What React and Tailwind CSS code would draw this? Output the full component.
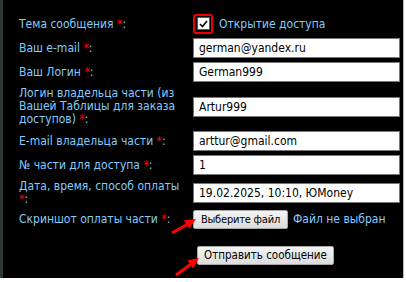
import React from "react";

const Star = () => <span className="text-[#ff0000]">*</span>;

const inputCls =
  "w-[207px] h-[20px] bg-white border border-[#767676] px-[5px] text-[12px] leading-[18px] text-black";

function Row({ h, label, children }) {
  return (
    <div className={`flex items-center ${h}`}>
      <div className="w-[174px] shrink-0 whitespace-nowrap text-[12px] leading-[13px] text-[#84ccff]">
        {label}
      </div>
      <div className="flex items-center">{children}</div>
    </div>
  );
}

function Field({ value }) {
  return <div className={inputCls}>{value}</div>;
}

export default function App() {
  return (
    <div className="w-[406px] h-[282px] bg-white font-['DejaVu_Sans_Condensed','DejaVu_Sans',sans-serif]">
      <div className="relative w-[404px] h-[278px] bg-black border-l-[3px] border-l-[#2c3838] border-r border-r-[#b8b8b8] pl-[16px] pt-[12px]">
        <Row
          h="h-[24px]"
          label={
            <>
              Тема сообщения <Star />:
            </>
          }
        >
          <div className="w-[20px] h-[20px] border-2 border-[#ee0000] rounded-[3px] flex items-center justify-center -mt-[1px]">
            <div className="w-[13px] h-[13px] bg-white border border-[#555] flex items-center justify-center">
              <svg width="9" height="8" viewBox="0 0 9 8">
                <path d="M1 4 L3.5 6.5 L8 1" stroke="#000" strokeWidth="1.6" fill="none" />
              </svg>
            </div>
          </div>
          <span className="ml-[6px] text-[12px] text-[#84ccff] whitespace-nowrap">Открытие доступа</span>
        </Row>
        <Row
          h="h-[24px]"
          label={
            <>
              Ваш e-mail <Star />:
            </>
          }
        >
          <Field value="german@yandex.ru" />
        </Row>
        <Row
          h="h-[24px]"
          label={
            <>
              Ваш Логин <Star />:
            </>
          }
        >
          <Field value="German999" />
        </Row>
        <Row
          h="h-[45px]"
          label={
            <>
              Логин владельца части (из
              <br />
              Вашей Таблицы для заказа
              <br />
              доступов) <Star />:
            </>
          }
        >
          <Field value="Artur999" />
        </Row>
        <Row
          h="h-[24px]"
          label={
            <>
              E-mail владельца части <Star />:
            </>
          }
        >
          <Field value="arttur@gmail.com" />
        </Row>
        <Row
          h="h-[24px]"
          label={
            <>
              № части для доступа <Star />:
            </>
          }
        >
          <Field value="1" />
        </Row>
        <Row
          h="h-[31px]"
          label={
            <>
              Дата, время, способ оплаты
              <br />
              <Star />:
            </>
          }
        >
          <Field value="19.02.2025, 10:10, ЮMoney" />
        </Row>
        <Row
          h="h-[22px]"
          label={
            <>
              Скриншот оплаты части <Star />:
            </>
          }
        >
          <button className="w-[95px] h-[19px] px-0 bg-gradient-to-b from-[#f4f4f4] to-[#dcdcdc] border border-[#a8a8a8] rounded-[2px] text-[11px] tracking-[-0.2px] leading-[17px] text-black whitespace-nowrap">
            Выберите файл
          </button>
          <span className="ml-[5px] text-[12px] text-[#84ccff] whitespace-nowrap">Файл не выбран</span>
        </Row>
        <div className="flex mt-[16px] pl-[178px]">
          <button className="w-[137px] h-[19px] px-0 bg-gradient-to-b from-[#f4f4f4] to-[#dcdcdc] border border-[#a8a8a8] rounded-[2px] text-[11.5px] leading-[17px] text-black whitespace-nowrap">
            Отправить сообщение
          </button>
        </div>
        <svg
          className="absolute left-[-3px] top-0 pointer-events-none"
          width="406"
          height="282"
          viewBox="0 0 406 282"
        >
          <line x1="172" y1="233" x2="187" y2="224.5" stroke="#ff0000" strokeWidth="3" />
          <polygon points="196,219 189,228.8 184,220.2" fill="#ff0000" />
          <line x1="176" y1="275" x2="190.5" y2="264.5" stroke="#ff0000" strokeWidth="3" />
          <polygon points="199,258 193.2,268.5 187.2,260.5" fill="#ff0000" />
        </svg>
      </div>
    </div>
  );
}
